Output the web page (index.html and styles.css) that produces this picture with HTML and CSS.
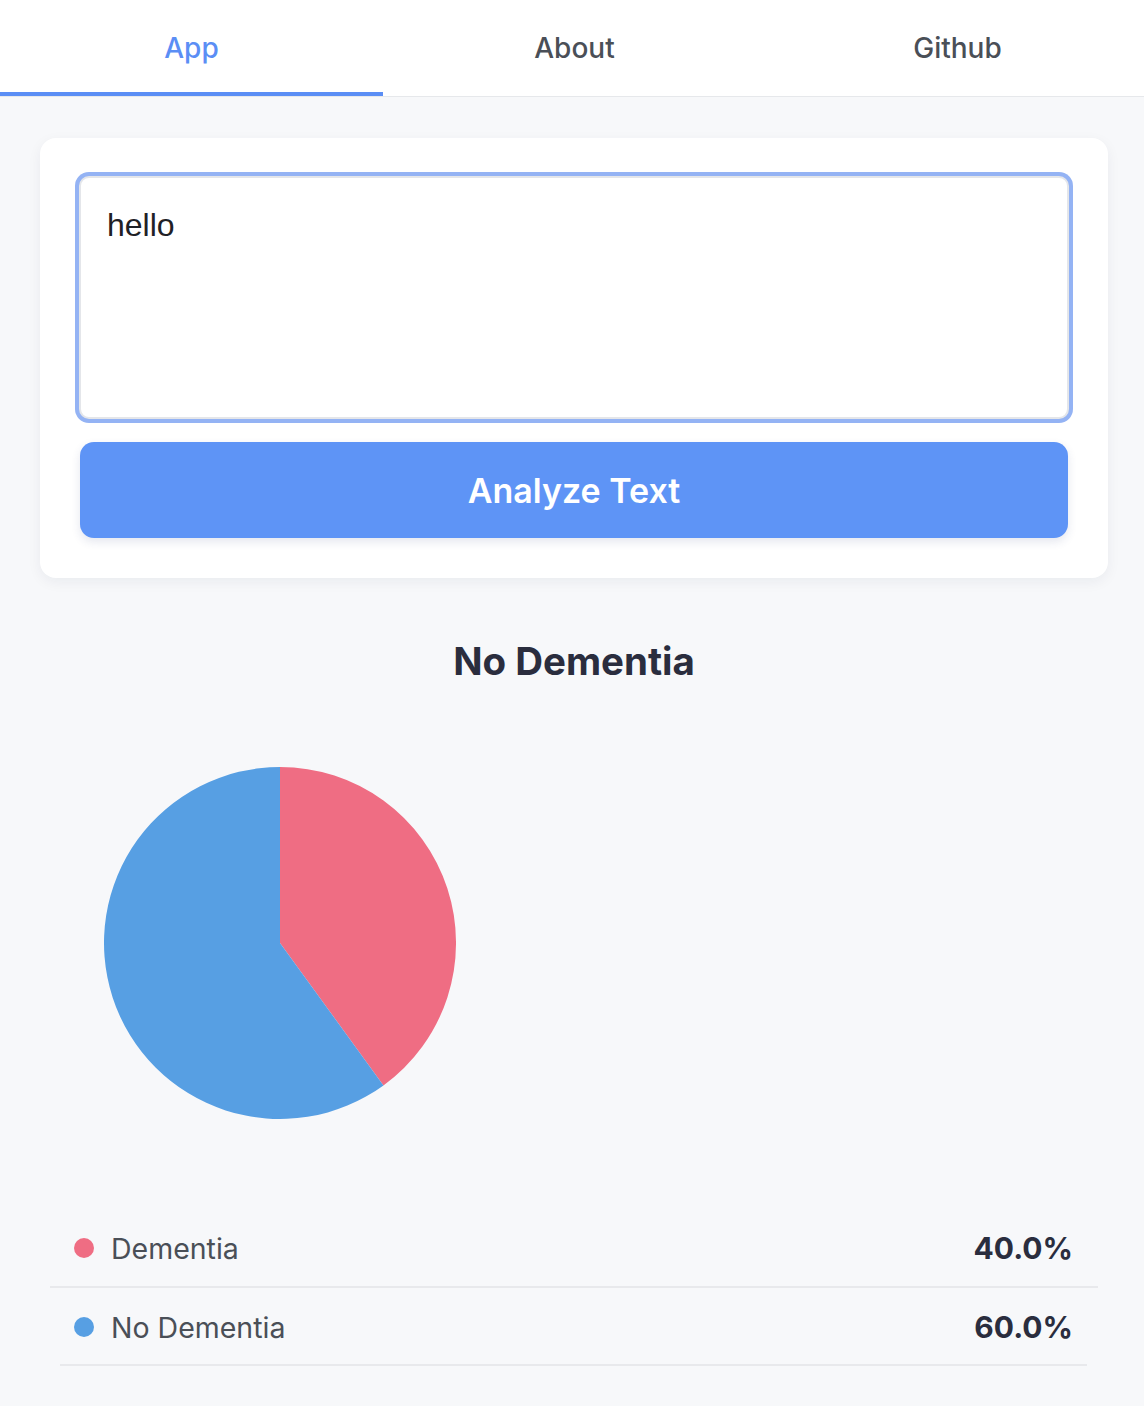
FILE: index.html
```html
<!DOCTYPE html>
<html lang="en">
<head>
<meta charset="utf-8">
<title>Dementia Text Analyzer</title>
<link rel="stylesheet" href="styles.css">
</head>
<body>
<nav class="tabs">
  <a class="tab active">App</a>
  <a class="tab">About</a>
  <a class="tab">Github</a>
</nav>
<main class="main">
  <section class="card">
    <textarea class="input">hello</textarea>
    <button class="btn">Analyze Text</button>
  </section>
  <h2 class="result-title">No Dementia</h2>
  <div class="chart">
    <svg width="352" height="352" viewBox="0 0 352 352">
      <path d="M176 176 L176 0 A176 176 0 0 1 279.45 318.39 Z" fill="#ef6d83"/>
      <path d="M176 176 L279.45 318.39 A176 176 0 1 1 176 0 Z" fill="#579fe3"/>
    </svg>
  </div>
  <ul class="legend">
    <li class="row"><span class="dot red"></span><span class="label">Dementia</span><span class="pct">40.0%</span></li>
    <li class="row last"><span class="dot blue"></span><span class="label">No Dementia</span><span class="pct">60.0%</span></li>
  </ul>
</main>
</body>
</html>
```
FILE: styles.css
```css
* { box-sizing: border-box; }
html, body { margin: 0; padding: 0; }
body {
  background: #f7f8fa;
  font-family: Inter, "Noto Sans", sans-serif;
  color: #2a2d3e;
  overflow: hidden;
}
.tabs {
  display: grid;
  grid-template-columns: repeat(3, 383px);
  background: #ffffff;
  border-bottom: 1px solid #e6e8eb;
}
.tab {
  height: 96px;
  padding-top: 3px;
  display: flex;
  align-items: center;
  justify-content: center;
  font-size: 28px;
  font-weight: 500;
  color: #4a4f57;
  border-bottom: 4px solid transparent;
}
.tab.active {
  color: #5b8ef5;
  border-bottom-color: #5b8ef5;
}
.main {
  padding: 41px 36px 20px 40px;
}
.card {
  background: #ffffff;
  border-radius: 16px;
  padding: 38px 40px 40px;
  box-shadow: 0 4px 14px rgba(20, 30, 60, 0.06);
  display: flex;
  flex-direction: column;
  gap: 23px;
}
.input {
  display: block;
  width: calc(100% + 2px);
  margin: 0 -1px;
  height: 243px;
  resize: none;
  border: 2px solid #e4e6ea;
  border-radius: 10px;
  box-shadow: 0 0 0 4px #94b3f4;
  outline: none;
  padding: 28px 26px;
  font-family: "Liberation Sans", Arial, sans-serif;
  font-size: 32px;
  line-height: 1.2;
  color: #1f2126;
  background: #ffffff;
}
.btn {
  display: block;
  width: 100%;
  height: 96px;
  border: none;
  border-radius: 14px;
  background: #5e94f6;
  color: #ffffff;
  font-family: Inter, sans-serif;
  font-size: 34px;
  font-weight: 600;
  box-shadow: 0 4px 10px rgba(40, 60, 120, 0.12);
}
.result-title {
  margin: 59px 0 0;
  text-align: center;
  font-size: 38.5px;
  line-height: 48px;
  font-weight: 700;
  color: #2a2d3e;
}
.chart {
  padding: 82px 0 0 64px;
  height: 434px;
}
.chart svg { display: block; }
.legend {
  list-style: none;
  margin: 91px 0 0;
  padding: 0 10px;
}
.row {
  display: flex;
  align-items: center;
  height: 78px;
  padding: 0 25px 0 24px;
  border-bottom: 2px solid #e8e9ec;
  position: relative;
}
.row.last {
  border-bottom: none;
}
.row.last::after {
  content: "";
  position: absolute;
  left: 10px;
  right: 11px;
  bottom: 0;
  height: 2px;
  background: #e8e9ec;
}
.dot {
  width: 20px;
  height: 20px;
  border-radius: 50%;
  margin-right: 17px;
}
.dot.red { background: #ef6d83; }
.dot.blue { background: #579fe3; }
.label {
  flex: 1;
  font-size: 28.5px;
  color: #4a4f57;
}
.pct {
  font-size: 30px;
  font-weight: 700;
  color: #2a2d3e;
}
```
